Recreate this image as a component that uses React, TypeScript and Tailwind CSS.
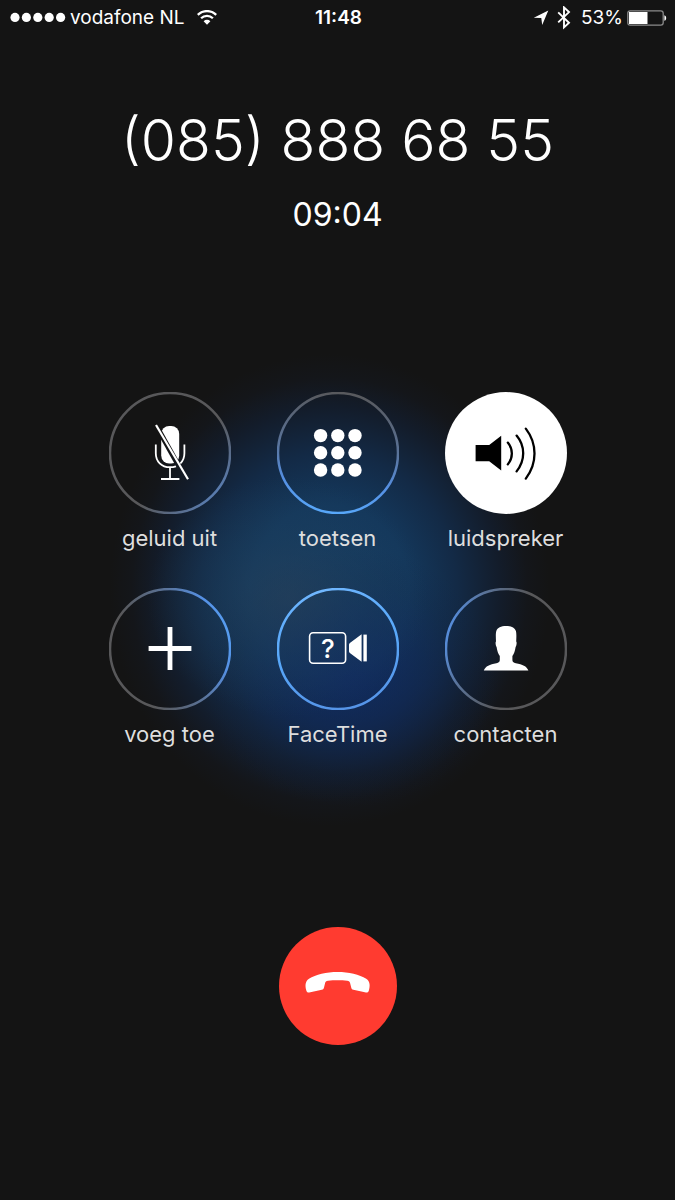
import type { ReactNode } from "react"

interface CallAction {
  id: string
  label: string
  icon: ReactNode
  // centre of the glow, seen from the top left of this button
  glow: [number, number]
  active?: boolean
}

function SignalDots() {
  return (
    <svg className="h-3 w-14" viewBox="0 0 56 12" fill="currentColor" aria-hidden="true">
      {[5, 16.4, 27.8, 39.2, 50.6].map((cx) => (
        <circle key={cx} cx={cx} cy="5.4" r="4.6" />
      ))}
    </svg>
  )
}

function WifiIcon() {
  return (
    <svg className="h-4 w-5" viewBox="0 0 20 16" fill="none" stroke="currentColor" strokeWidth="2.3" aria-hidden="true">
      <path d="M.8 4.9a13 13 0 0 1 18.4 0" />
      <path d="M4.1 8.3a8.4 8.4 0 0 1 11.8 0" />
      <path d="M10 14.7 6.6 11.2a4.9 4.9 0 0 1 6.8 0z" fill="currentColor" stroke="none" />
    </svg>
  )
}

function LocationIcon() {
  return (
    <svg className="h-4 w-4" viewBox="0 0 16 16" fill="currentColor" aria-hidden="true">
      <path d="M15.3.6 9.2 15 8.3 8 .8 7.8z" />
    </svg>
  )
}

function BluetoothIcon() {
  return (
    <svg className="h-6 w-[14px]" viewBox="0 0 14 24" fill="none" stroke="currentColor" strokeWidth="1.9" aria-hidden="true">
      <path d="m1.2 6.4 10.8 10.3-5 4.7V1.4l5 4.7L1.2 16.4" />
    </svg>
  )
}

function BatteryIcon() {
  return (
    <svg className="h-4 w-10" viewBox="0 0 40 16" aria-hidden="true">
      <rect x=".8" y=".8" width="35.4" height="14.4" rx="2.4" fill="none" stroke="#8a8a8a" strokeWidth="1.3" />
      <path d="M2 2h18.5v12H2z" fill="#fff" />
      <path d="M37.4 5.2c2.4.6 2.4 5 0 5.6z" fill="#fff" />
    </svg>
  )
}

function MicOffIcon() {
  return (
    <svg viewBox="0 0 122 122" fill="none" stroke="#fff" strokeWidth="1.8" aria-hidden="true">
      <defs>
        <mask id="mic-slash">
          <path d="M0 0h122v122H0z" fill="#fff" stroke="none" />
          <path d="m43.5 27 38 68" stroke="#000" strokeWidth="5.2" />
        </mask>
      </defs>
      <g mask="url(#mic-slash)">
        <rect x="52.2" y="34" width="18" height="37.6" rx="8" fill="#fff" stroke="none" />
        <path d="M46.8 52.6v8.6c0 8.2 5.6 14 14.2 14s14.4-5.8 14.4-14v-8.6" />
      </g>
      <path d="M61 75v12M52 87h18.4" />
      <path d="m47 33 32 54.2" strokeWidth="2.2" />
    </svg>
  )
}

function KeypadIcon() {
  const steps = [43.6, 60.8, 78]
  return (
    <svg viewBox="0 0 122 122" fill="#fff" aria-hidden="true">
      {steps.map((cy) => steps.map((cx) => <circle key={`${cx}-${cy}`} cx={cx} cy={cy} r="6.7" />))}
    </svg>
  )
}

function SpeakerIcon() {
  return (
    <svg viewBox="0 0 122 122" fill="none" stroke="#000" strokeWidth="2.3" strokeLinecap="round" aria-hidden="true">
      <path d="M30.6 53h13.6l12-9.2v34.6l-12-9.2H30.6z" fill="#000" stroke="none" />
      <path d="M62.8 50.6c5.4 6.6 5.4 15 0 21.8M71.6 43.6c8.800 10.600 8.800 24.600 0 35.800M80.800 36.600c11.600 15 11.600 35 0 50" />
    </svg>
  )
}

function PlusIcon() {
  return (
    <svg viewBox="0 0 122 122" fill="none" stroke="#fff" strokeWidth="4.8" aria-hidden="true">
      <path d="M61 39v43M39.6 60.5h42.8" />
    </svg>
  )
}

function FaceTimeIcon() {
  return (
    <svg viewBox="0 0 122 122" fill="#fff" aria-hidden="true">
      <rect x="32.6" y="44.8" width="36" height="30.4" rx="3.5" fill="none" stroke="#fff" strokeWidth="1.6" />
      <text x="50.8" y="70" textAnchor="middle" fontSize="26" fontWeight="500">?</text>
      <path d="M84.6 46.2v27.6l-11.4-8.6c-.8-.6-1.2-1.2-1.2-2.2v-6c0-1 .4-1.600 1.200-2.200z" />
      <path d="M86.4 46.600h3.400v26.800h-3.400z" />
    </svg>
  )
}

function ContactIcon() {
  return (
    <svg viewBox="0 0 122 122" fill="#fff" aria-hidden="true">
      <path d="M61 38c5 0 8.800 1.800 9.800 4.800.8 2.400.6 6.400.4 10.600.8.6.4 4.400-.6 5.600-.6 4-1.600 6.800-3.200 9v4c0 2 1 2.600 3.400 3.200 6.800 1.400 10.800 2.600 12.600 7.400H38.800c1.800-4.800 5.800-6 12.600-7.400 2.400-.6 3.400-1.200 3.400-3.200v-4c-1.600-2.200-2.600-5-3.200-9-1-1.200-1.400-5-.6-5.600-.2-4.200-.4-8.200.4-10.600C52.400 39.800 56 38 61 38z" />
    </svg>
  )
}

function HangUpIcon() {
  return (
    <svg viewBox="0 0 118 118" fill="#fff" aria-hidden="true">
      <path d="M58.600 45c11 0 22 2.400 28.600 6.800 4 2.800 4 7 2.600 12-.4 1.400-1.400 2-2.800 1.700l-12.600-2.700c-1.400-.3-2-1-2.200-2.200l-1-4.200c-.4-1.800-1.200-2.500-3-2.700-6-.6-13.200-.6-19.200 0-1.800.2-2.600.9-3 2.700l-1 4.200c-.2 1.200-.8 1.900-2.200 2.200l-12.600 2.700c-1.400.3-2.400-.3-2.800-1.700-1.400-5-1.400-9.200 2.600-12C36.600 47.400 47.600 45 58.600 45z" />
    </svg>
  )
}

const ACTIONS: CallAction[] = [
  { id: "mute", label: "geluid uit", icon: <MicOffIcon />, glow: [216, 203] },
  { id: "keypad", label: "toetsen", icon: <KeypadIcon />, glow: [48, 203] },
  { id: "speaker", label: "luidspreker", icon: <SpeakerIcon />, glow: [-120, 203], active: true },
  { id: "add", label: "voeg toe", icon: <PlusIcon />, glow: [216, 7] },
  { id: "facetime", label: "FaceTime", icon: <FaceTimeIcon />, glow: [48, 7] },
  { id: "contacts", label: "contacten", icon: <ContactIcon />, glow: [-120, 7] },
]

function Ring({ id, glow }: { id: string; glow: [number, number] }) {
  return (
    <svg className="absolute inset-0" viewBox="0 0 122 122" fill="none" aria-hidden="true">
      <defs>
        <radialGradient id={`ring-${id}`} gradientUnits="userSpaceOnUse" cx={glow[0]} cy={glow[1]} r="205">
          <stop offset="0" stopColor="#72b8ff" />
          <stop offset=".4" stopColor="#58a8fa" />
          <stop offset=".6" stopColor="#5590e4" />
          <stop offset=".78" stopColor="#5a7399" />
          <stop offset="1" stopColor="#58585a" />
        </radialGradient>
      </defs>
      <circle cx="61" cy="61" r="60" stroke={`url(#ring-${id})`} strokeWidth="2.5" />
    </svg>
  )
}

function ActionButton({ action }: { action: CallAction }) {
  return (
    <button type="button" aria-pressed={action.active} className="flex w-[122px] flex-col items-center gap-2">
      <span className={action.active ? "relative size-[122px] rounded-full bg-white" : "relative size-[122px] rounded-full"}>
        {!action.active && <Ring id={action.id} glow={action.glow} />}
        {action.icon}
      </span>
      <span className="text-[22px] leading-8 whitespace-nowrap text-[#dedede]">{action.label}</span>
    </button>
  )
}

export default function App() {
  return (
    <div className="flex min-h-screen flex-col bg-[#141414] font-[Inter,sans-serif] text-white">
      <header className="grid h-9 grid-cols-[1fr_auto_1fr] items-center pr-2 pl-[10px] text-[19px] leading-6">
        <div className="flex items-center gap-1">
          <SignalDots />
          <span className="whitespace-nowrap">vodafone NL</span>
          <span className="pl-2">
            <WifiIcon />
          </span>
        </div>
        <time className="font-semibold">11:48</time>
        <div className="flex items-center justify-end gap-2">
          <LocationIcon />
          <BluetoothIcon />
          <div className="flex items-center gap-1 pl-0.5">
            <span>53%</span>
            <BatteryIcon />
          </div>
        </div>
      </header>

      <main className="flex flex-1 flex-col items-center">
        <h1 className="mt-[69px] text-[57px] leading-[72px] font-light whitespace-nowrap">(085) 888 68 55</h1>
        <p className="mt-[18px] text-[32px] leading-10">09:04</p>

        <section className="mt-[77px] flex w-full justify-center bg-[radial-gradient(140px_120px_at_calc(50%-50px)_285px,#2a435a90,#1f405c60_50%,#1f405c00),radial-gradient(150px_130px_at_calc(50%+12px)_365px,#0f2660b0,#0f265a80_40%,#10244830_75%,#10244800),radial-gradient(220px_236px_at_calc(50%-8px)_278px,#153c62,#14385c_36%,#132a46_58%,#131c2a_78%,#14161a_90%,#141414)] py-20">
          <div className="grid grid-cols-3 gap-x-[46px] gap-y-[34px]">
            {ACTIONS.map((action) => (
              <ActionButton key={action.id} action={action} />
            ))}
          </div>
        </section>

        <button type="button" aria-label="Ophangen" className="mt-[97px] size-[118px] rounded-full bg-[#ff3b30]">
          <HangUpIcon />
        </button>
      </main>
    </div>
  )
}
